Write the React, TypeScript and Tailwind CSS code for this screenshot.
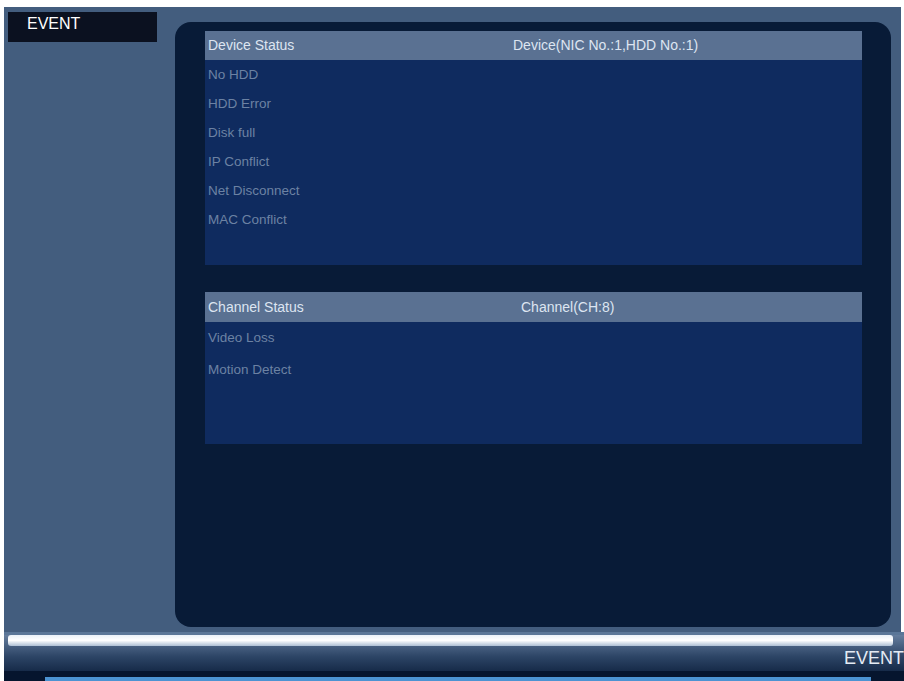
import React from "react";

const deviceItems = ["No HDD", "HDD Error", "Disk full", "IP Conflict", "Net Disconnect", "MAC Conflict"];
const channelItems = ["Video Loss", "Motion Detect"];

export default function App() {
  return (
    <div
      className="w-[904px] h-[681px] bg-white overflow-hidden flex flex-col pt-[7px]"
      style={{ fontFamily: '"Liberation Sans", Arial, sans-serif' }}
    >
      {/* main area */}
      <div className="ml-[4px] mr-[3px] h-[625px] bg-[#435d7e] flex">
        {/* left column */}
        <div className="w-[171px] shrink-0 pt-[5px] pl-[4px]">
          <div className="w-[149px] h-[30px] bg-[#0b1120] text-white text-[16px] leading-[30px] pl-[19px]">
            <span className="relative top-[-3px]">EVENT</span>
          </div>
        </div>
        {/* dark panel */}
        <div className="mt-[15px] w-[716px] h-[605px] rounded-[16px] bg-[#081b37] pt-[9px] pl-[30px] pr-[29px]">
          {/* device status */}
          <div className="w-[657px]">
            <div className="h-[29px] bg-[#5a7192] flex items-center text-[14px] text-[#dde5f1]">
              <div className="w-[308px] pl-[3px]">Device Status</div>
              <div>Device(NIC No.:1,HDD No.:1)</div>
            </div>
            <div className="h-[205px] bg-[#0f2b5f] pt-[1px]">
              {deviceItems.map((t) => (
                <div key={t} className="h-[29px] flex items-center pl-[3px] text-[13.5px] text-[#6c82a3]">
                  {t}
                </div>
              ))}
            </div>
          </div>
          {/* channel status */}
          <div className="w-[657px] mt-[27px]">
            <div className="h-[30px] bg-[#5a7192] flex items-center text-[14px] text-[#dde5f1]">
              <div className="w-[316px] pl-[3px]">Channel Status</div>
              <div>Channel(CH:8)</div>
            </div>
            <div className="h-[122px] bg-[#0f2b5f] pt-[0px]">
              {channelItems.map((t) => (
                <div key={t} className="h-[32px] flex items-center pl-[3px] text-[13.5px] text-[#6c82a3]">
                  {t}
                </div>
              ))}
            </div>
          </div>
        </div>
      </div>
      {/* bottom bar */}
      <div className="ml-[4px] flex-1 flex flex-col bg-gradient-to-b from-[#6e86a6] via-[#2d4566] to-[#081a36]">
        <div className="h-[3px] bg-[#5a7698]" />
        <div className="mx-[4px] mr-[11px] h-[11px] rounded-[3px] bg-gradient-to-b from-[#e9f0f8] via-[#ffffff] to-[#aebfd4]" />
        <div className="flex-1 flex justify-end items-start">
          <span className="text-[18px] leading-[20px] text-[#e4ebf4] mt-[2px]">EVENT</span>
        </div>
        <div className="h-[6px] bg-[#06152e]" />
        <div className="h-[4px] flex bg-[#06152e]">
          <div className="ml-[41px] w-[826px] bg-[#4c93d2]" />
        </div>
      </div>
    </div>
  );
}
